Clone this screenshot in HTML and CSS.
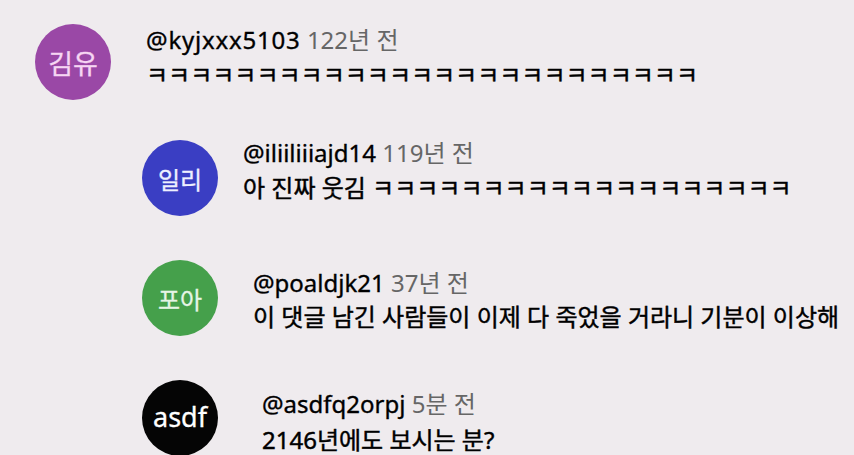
FILE: index.html
```html
<!DOCTYPE html><html lang="ko">
<head>
  <meta charset="UTF-8">
  <meta name="viewport" content="width=device-width, initial-scale=1.0">
  <title>댓글</title>
  <link rel="stylesheet" href="styles.css">
</head>
<body>
  <div class="thread">
    <div class="comment r1">
      <div class="avatar purple">김유</div>
      <div class="content">
        <div class="meta"><span class="user">@kyjxxx5103</span> <span class="time">122년 전</span></div>
        <div class="text">ㅋㅋㅋㅋㅋㅋㅋㅋㅋㅋㅋㅋㅋㅋㅋㅋㅋㅋㅋㅋㅋㅋㅋㅋㅋ</div>
      </div>
    </div>

    <div class="replies">
      <div class="comment r2">
        <div class="avatar blue">일리</div>
        <div class="content">
          <div class="meta"><span class="user">@iliiliiiajd14</span> <span class="time">119년 전</span></div>
          <div class="text">아 진짜 웃김 ㅋㅋㅋㅋㅋㅋㅋㅋㅋㅋㅋㅋㅋㅋㅋㅋㅋㅋㅋ</div>
        </div>
      </div>

      <div class="comment r3">
        <div class="avatar green">포아</div>
        <div class="content">
          <div class="meta"><span class="user">@poaldjk21</span> <span class="time">37년 전</span></div>
          <div class="text">이 댓글 남긴 사람들이 이제 다 죽었을 거라니 기분이 이상해</div>
        </div>
      </div>

      <div class="comment r4">
        <div class="avatar black">asdf</div>
        <div class="content">
          <div class="meta"><span class="user">@asdfq2orpj</span> <span class="time">5분 전</span></div>
          <div class="text">2146년에도 보시는 분?</div>
        </div>
      </div>
    </div>
  </div>
</body>
</html>
```

FILE: styles.css
```css
html, body { margin: 0; height: 100%; overflow: hidden; }
body { background: #efebee; font-family: "Noto Sans", "Noto Sans CJK KR", sans-serif; color: #000; }

.thread { padding: 24px 0 0 35px; }
.replies { margin-left: 107px; }

.comment { display: flex; align-items: flex-start; }
.replies .comment { margin-top: 44px; }
.replies .r2 { margin-top: 40px; }

.avatar { flex: none; width: 76px; height: 76px; border-radius: 50%; display: flex; align-items: center; justify-content: center; font-family: "Noto Sans CJK KR", sans-serif; font-size: 24px; color: #fff; -webkit-text-stroke: 0.3px currentColor; }
.purple { background: #9a48a6; color: #f6d6f3; font-size: 27px; }
.blue { background: #3a3ec3; color: #eef0ff; }
.green { background: #45a04b; color: #e6f4e6; }
.black { background: #050505; font-family: "Noto Sans", sans-serif; font-size: 27px; padding-bottom: 4px; box-sizing: border-box; }

.content { line-height: 35px; }
.meta { font-size: 24px; white-space: nowrap; }
.user { color: #000; -webkit-text-stroke: 0.35px #000; }
.r1 .user { letter-spacing: 0.8px; }
.time { color: #666; }
.text { font-size: 24px; white-space: nowrap; -webkit-text-stroke: 0.45px #000; }

.r1 .content { margin: -2px 0 0 35px; }
.r2 .content { margin: -5px 0 0 25px; }
.r3 .content { margin: 5px 0 0 35px; }
.r3 .text { margin-top: -1px; }
.r4 .content { margin: 6px 0 0 44px; }
.r4 .text { margin-top: 1px; }
```
